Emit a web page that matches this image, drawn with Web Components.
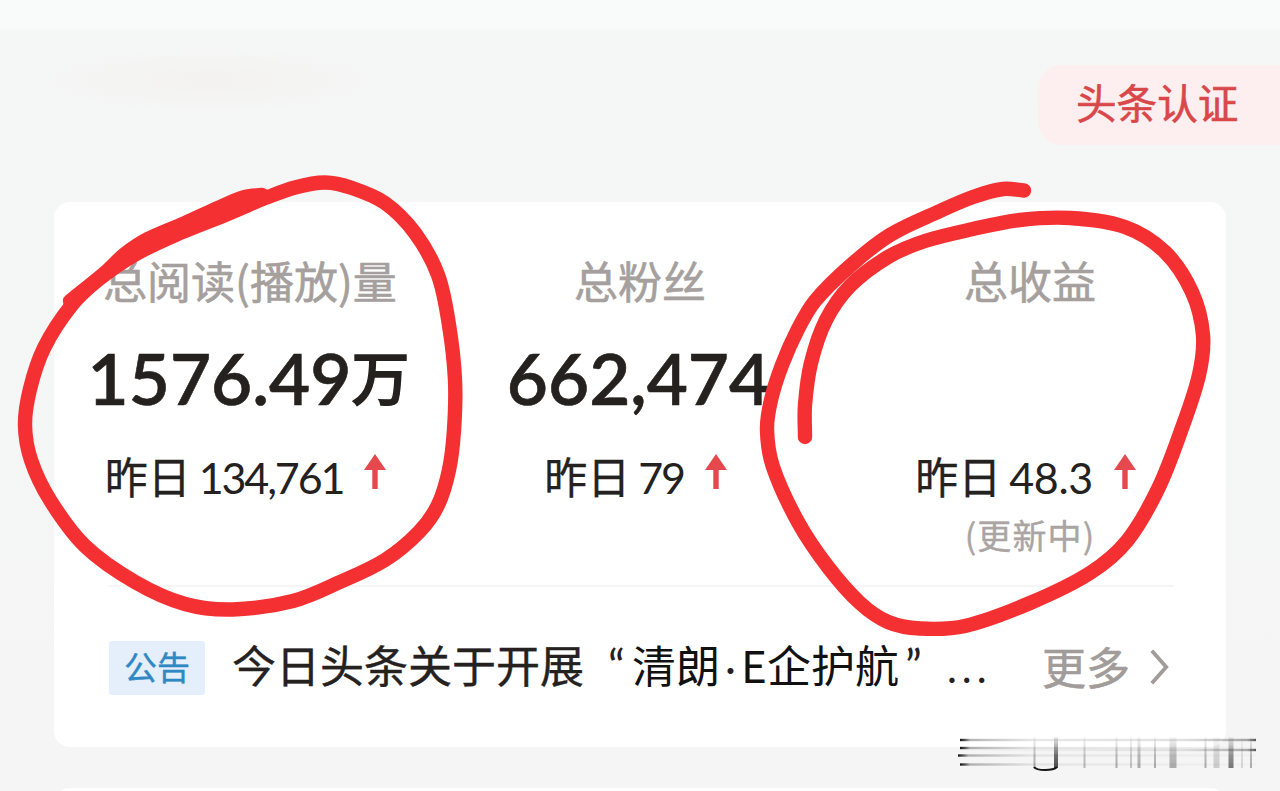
<!DOCTYPE html>
<html lang="zh-CN">
<head>
<meta charset="utf-8">
<title>总收益</title>
<style>
  html, body {
    margin: 0;
    height: 100%;
    overflow: hidden;
  }
</style>
</head>
<body>
<creator-page></creator-page>

<template id="creator-page">
  <style>
    :host {
      display: flex;
      flex-direction: column;
      position: relative;
      box-sizing: border-box;
      width: 1280px;
      height: 791px;
      overflow: hidden;
      background:
        radial-gradient(ellipse 190px 34px at 210px 80px, #f3f2f0 0%, rgba(243, 242, 240, 0) 100%),
        linear-gradient(#f9fafa 0, #f9fafa 27px, #f5f6f6 31px, #f5f5f5 100%);
      font-family: Lato, "Noto Sans CJK SC", sans-serif;
      color: #24211f;
    }
    header {
      display: flex;
      justify-content: flex-end;
      flex: none;
      padding-top: 65px;
      height: 202px;
      box-sizing: border-box;
    }
    main {
      display: flex;
      flex-direction: column;
      flex: none;
      margin: 0 54px;
      height: 545px;
      background: #fff;
      border-radius: 16px;
    }
    .stats {
      display: grid;
      grid-template-columns: repeat(3, 390px);
      height: 383px;
      padding-left: 1px;
    }
    .income {
      --digit-gap: -0.4px;
    }
    hr {
      width: 1065px;
      height: 2px;
      margin: 0 0 0 55px;
      border: 0;
      background: #f5f5f5;
    }
    footer {
      flex: none;
      height: 40px;
      margin: 41px 54px 0;
      background: #fff;
      border-radius: 16px 16px 0 0;
    }
  </style>
  <header><verify-badge>头条认证</verify-badge></header>
  <main>
    <div class="stats">
      <stat-column>
        <span slot="label">总阅读(播放)量</span>
        <span slot="value">1576.49</span><span slot="unit">万</span>
        <span slot="delta">134,761</span>
      </stat-column>
      <stat-column>
        <span slot="label">总粉丝</span>
        <span slot="value">662,474</span>
        <span slot="delta">79</span>
      </stat-column>
      <stat-column class="income">
        <span slot="label">总收益</span>
        <span slot="delta">48.3</span>
        <span slot="note">(更新中)</span>
      </stat-column>
    </div>
    <hr>
    <notice-bar></notice-bar>
  </main>
  <footer></footer>
  <streak-mark></streak-mark>
  <pen-marks></pen-marks>
</template>

<template id="verify-badge">
  <style>
    :host {
      display: flex;
      align-items: center;
      box-sizing: border-box;
      width: 242px;
      height: 80px;
      padding: 0 0 3px 38px;
      border-radius: 24px 0 0 24px;
      background: #fdefef;
      color: #d9474b;
      font-size: 40.6px;
      -webkit-text-stroke: 0.6px;
      line-height: 60px;
      white-space: nowrap;
    }
  </style>
  <slot></slot>
</template>

<template id="stat-column">
  <style>
    :host {
      display: flex;
      flex-direction: column;
      align-items: center;
      padding-top: 48px;
      white-space: nowrap;
    }
    .label {
      height: 60px;
      line-height: 60px;
      font-family: "Noto Sans CJK SC", sans-serif;
      font-size: 44px;
      -webkit-text-stroke: 0.6px;
      color: #a5a09e;
    }
    .value {
      height: 80px;
      margin: 28px 3px 0 0;
      line-height: 80px;
      font-size: 71px;
      font-weight: 600;
      -webkit-text-stroke: 0.6px;
    }
    .unit {
      font-size: 58px;
      font-weight: 500;
      line-height: 0;
      vertical-align: 5px;
      -webkit-text-stroke: 1.4px;
    }
    .delta {
      display: flex;
      align-items: baseline;
      height: 50px;
      margin: 35px 8px 0 0;
      line-height: 50px;
      font-size: 43px;
    }
    .delta span:first-child {
      -webkit-text-stroke: 0.3px;
    }
    .digits {
      margin-left: 8px;
      letter-spacing: var(--digit-gap, -2.1px);
    }
    svg {
      align-self: flex-start;
      width: 24px;
      height: 36px;
      margin: 1px 0 0 20px;
    }
    .note {
      margin-top: 12px;
      height: 40px;
      line-height: 40px;
      font-family: "Noto Sans CJK SC", sans-serif;
      font-size: 34px;
      -webkit-text-stroke: 0.4px;
      letter-spacing: 1.1px;
      color: #aaa5a3;
    }
  </style>
  <div class="label"><slot name="label"></slot></div>
  <div class="value"><slot name="value"></slot><span class="unit"><slot name="unit"></slot></span></div>
  <div class="delta">
    <span>昨日</span>
    <span class="digits"><slot name="delta"></slot></span>
    <svg viewBox="0 0 24 36"><path d="M12 0 23 16H14.7V35H9.3V16H1Z" fill="#e5484d"/></svg>
  </div>
  <div class="note"><slot name="note"></slot></div>
</template>

<template id="notice-bar">
  <style>
    :host {
      display: flex;
      align-items: center;
      height: 54px;
      margin: 54px 55px 0;
      line-height: 54px;
      font-family: "Noto Sans CJK SC", sans-serif;
      font-size: 44px;
      white-space: nowrap;
    }
    .tag {
      flex: none;
      width: 96px;
      height: 54px;
      line-height: 50px;
      text-align: center;
      border-radius: 3px;
      background: #e4effb;
      color: #3088c3;
      font-size: 33px;
      -webkit-text-stroke: 0.4px;
    }
    .title {
      display: flex;
      flex: none;
      align-items: baseline;
      margin: -5px 0 0 27px;
      width: 783px;
    }
    .lead {
      -webkit-text-stroke: 0.4px;
    }
    .name {
      color: #111;
    }
    .mark {
      font-family: Lato, sans-serif;
      font-size: 46px;
    }
    .open {
      margin-left: 24px;
      width: 24px;
    }
    .dot {
      display: flex;
      justify-content: center;
      width: 21px;
      font-size: 40px;
    }
    .close {
      margin-left: 6px;
      width: 42px;
    }
    .rest {
      font-size: 42px;
      letter-spacing: 5px;
    }
    .more {
      margin: -5px 0 0 27px;
      -webkit-text-stroke: 0.6px;
      color: #a19c9a;
    }
    svg {
      width: 24px;
      height: 40px;
      margin: -2px 0 0 18px;
    }
  </style>
  <span class="tag">公告</span>
  <span class="title"><span class="lead">今日头条关于开展</span><span class="mark open">“</span><span class="name">清朗</span><span class="mark dot">·</span><span class="name">E企护航</span><span class="mark close">”</span><span class="mark rest">...</span></span>
  <span class="more">更多</span>
  <svg viewBox="0 0 24 40"><path d="M4 3 19 20 4 37" fill="none" stroke="#a19c9a" stroke-width="4"/></svg>
</template>

<script>
/**
 * Defines an element whose shadow root is cloned from the template with the same id.
 *
 * @param {string} name - The tag name, and the id of the template.
 */
function defineFromTemplate (name) {
  const template = document.getElementById(name)
  customElements.define(name, class extends HTMLElement {
    constructor () {
      super()
      this.attachShadow({ mode: 'open' })
        .appendChild(template.content.cloneNode(true))
    }
  })
}

defineFromTemplate('verify-badge')
defineFromTemplate('stat-column')
defineFromTemplate('notice-bar')

/**
 * Makes a smooth path through all the points. The handles get a third of the length
 * of their own segment, so that uneven points give no bumps.
 *
 * @param {number[][]} pts - The points the pen passed.
 * @returns {string} The path data.
 */
function smoothPath (pts) {
  const dirs = pts.map((p, i) => {
    const a = pts[i - 1] || p
    const b = pts[i + 1] || p
    const len = Math.hypot(b[0] - a[0], b[1] - a[1])
    return [(b[0] - a[0]) / len, (b[1] - a[1]) / len]
  })
  let d = `M${pts[0]}`
  for (let i = 1; i < pts.length; i++) {
    const [x1, y1] = pts[i - 1]
    const [x2, y2] = pts[i]
    const h = Math.hypot(x2 - x1, y2 - y1) / 3
    d += `C${x1 + dirs[i - 1][0] * h} ${y1 + dirs[i - 1][1] * h} ` +
      `${x2 - dirs[i][0] * h} ${y2 - dirs[i][1] * h} ${x2} ${y2}`
  }
  return d
}

customElements.define('pen-marks',
  /**
   * Hand drawn red rings that lie over the card.
   */
  class extends HTMLElement {
    #strokes = [
      [[262, 195], [245, 197], [220, 207], [185, 223], [148, 239], [125, 254], [108, 270], [95, 281], [70, 301]],
      [[260, 200], [295, 187.5], [325, 182.5], [352, 188], [385, 203], [415, 233], [438, 275], [449, 325],
        [455, 380], [454, 430], [449, 470], [438, 505], [419, 532], [385, 560], [340, 582], [293, 601],
        [233, 609.5], [185, 604], [135, 582], [85, 546], [50, 500], [31, 460], [25, 425],
        [30, 389], [44, 348], [71, 306], [98, 280], [136, 254], [180, 233], [225, 215], [260, 200]],
      [[1024, 190.5], [1003, 189], [973, 197], [940, 211], [890, 235], [850, 266], [815, 301], [798, 329],
        [782, 365], [771, 400], [767, 430], [773, 467], [798, 522], [828, 567], [860, 603], [888, 622], [920, 628.5],
        [965, 626], [1030, 603], [1090, 573], [1127, 541], [1158, 489], [1182, 428], [1199, 375],
        [1203, 335], [1192, 292], [1165, 252], [1125, 227], [1070, 218], [1020, 220], [973, 229],
        [925, 241], [888, 257], [850, 286], [826, 320], [811, 363], [805, 405], [805, 437]]
    ]

    constructor () {
      super()
      this.attachShadow({ mode: 'open' }).innerHTML = `
        <style>
          :host { display: block; position: absolute; inset: 0; }
        </style>
        <svg width="1280" height="791" fill="none" stroke="#f43032" stroke-width="14.4"
          stroke-linecap="round" stroke-linejoin="round">
          ${this.#strokes.map(s => `<path d="${smoothPath(s)}"/>`).join('')}
        </svg>`
    }
  }
)

customElements.define('streak-mark',
  /**
   * The smeared grid of streaks in the bottom right corner.
   */
  class extends HTMLElement {
    // x, width and opacity of each upright streak
    #uprights = [
      [1034.5, 2, 0.35], [1056, 4, 0.8], [1084.5, 2, 0.3], [1116.5, 2, 0.35], [1131, 2, 0.25],
      [1139, 3, 0.35], [1155, 2, 0.35], [1173, 7, 0.35], [1205.5, 2, 0.35], [1216.5, 6, 0.2],
      [1231, 5, 0.6], [1242, 1.5, 0.2], [1251, 2, 0.35]
    ]

    constructor () {
      super()
      const rows = [[740, 960, 'l'], [748, 960, 'l'], [755.5, 958, 'l'], [764.5, 960, 'l'], [740, 960, 'r'], [750, 960, 'r']]
      this.attachShadow({ mode: 'open' }).innerHTML = `
        <style>
          :host { display: block; position: absolute; inset: 0; }
        </style>
        <svg width="1280" height="791">
          <defs>
            <linearGradient id="l">
              <stop offset="0" stop-color="#111"/>
              <stop offset=".02" stop-color="#222" stop-opacity=".7"/>
              <stop offset=".035" stop-color="#444" stop-opacity=".4"/>
              <stop offset=".25" stop-color="#666" stop-opacity=".12"/>
              <stop offset="1" stop-color="#888" stop-opacity=".04"/>
            </linearGradient>
            <linearGradient id="r">
              <stop offset="0" stop-color="#888" stop-opacity="0"/>
              <stop offset=".75" stop-color="#666" stop-opacity=".15"/>
              <stop offset=".97" stop-color="#333" stop-opacity=".4"/>
              <stop offset="1" stop-color="#111" stop-opacity=".7"/>
            </linearGradient>
            <linearGradient id="v" x2="0" y2="1">
              <stop offset="0" stop-color="#222" stop-opacity=".1"/>
              <stop offset=".6" stop-color="#222" stop-opacity=".8"/>
              <stop offset="1" stop-color="#222"/>
            </linearGradient>
          </defs>
          ${rows.map(([y, x, g]) => `<rect x="${x}" y="${y - 1.2}" width="${1256 - x}" height="2.4" fill="url(#${g})"/>`).join('')}
          ${this.#uprights.map(([x, w, o]) => `<rect x="${x - w / 2}" y="737" width="${w}" height="31" fill="url(#v)" opacity="${o}"/>`).join('')}
          <path d="M1034 767Q1036 770 1045 770T1057 767" fill="none" stroke="#151515" stroke-width="2"/>
        </svg>`
    }
  }
)

defineFromTemplate('creator-page')
</script>
</body>
</html>
